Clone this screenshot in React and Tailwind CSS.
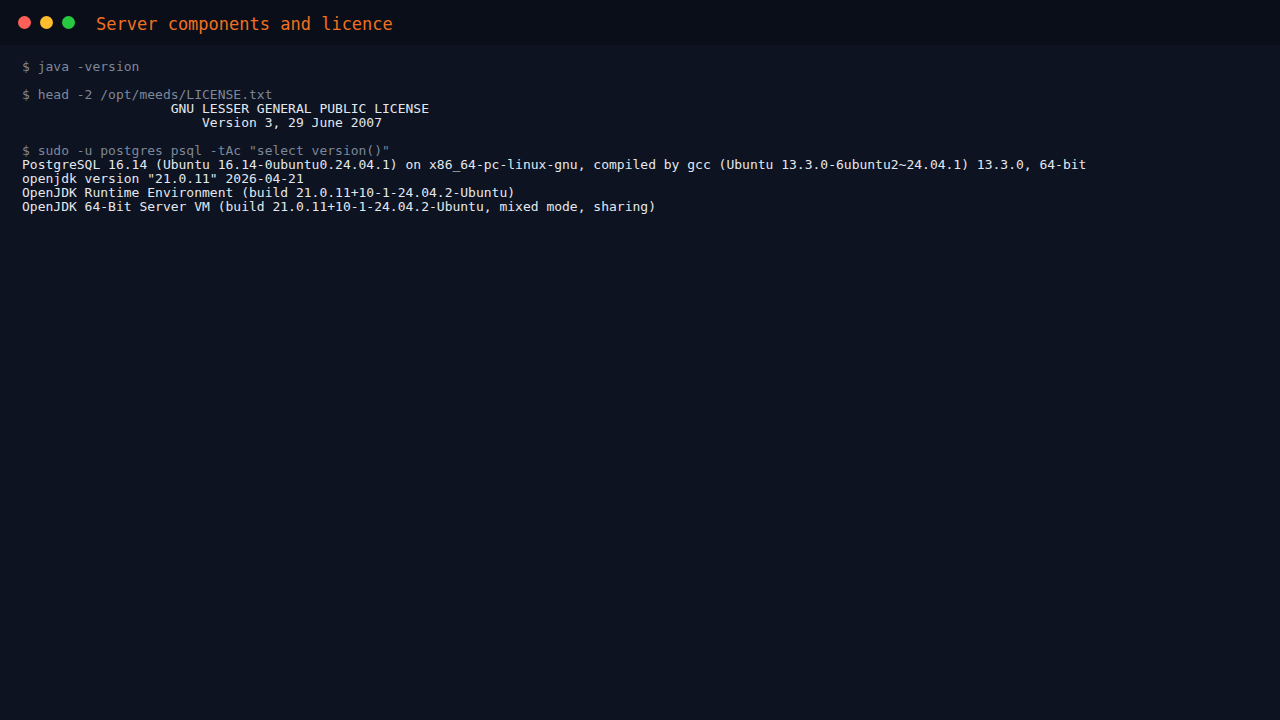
import React from 'react';

const lines = [
  { t: '$ java -version', cmd: true },
  { t: '' },
  { t: '$ head -2 /opt/meeds/LICENSE.txt', cmd: true },
  { t: '                   GNU LESSER GENERAL PUBLIC LICENSE' },
  { t: '                       Version 3, 29 June 2007' },
  { t: '' },
  { t: '$ sudo -u postgres psql -tAc "select version()"', cmd: true },
  { t: 'PostgreSQL 16.14 (Ubuntu 16.14-0ubuntu0.24.04.1) on x86_64-pc-linux-gnu, compiled by gcc (Ubuntu 13.3.0-6ubuntu2~24.04.1) 13.3.0, 64-bit' },
  { t: 'openjdk version "21.0.11" 2026-04-21' },
  { t: 'OpenJDK Runtime Environment (build 21.0.11+10-1-24.04.2-Ubuntu)' },
  { t: 'OpenJDK 64-Bit Server VM (build 21.0.11+10-1-24.04.2-Ubuntu, mixed mode, sharing)' },
];

const App = () => {
  return (
    <div className="min-h-screen w-full bg-[#0d1320] font-['DejaVu_Sans_Mono',monospace]">
      {/* title bar */}
      <div className="h-[45px] bg-[#0a0e18] flex items-center pl-[18px]">
        <div className="flex items-center gap-[9px]">
          <span className="w-[13px] h-[13px] rounded-full bg-[#ff5f57]"></span>
          <span className="w-[13px] h-[13px] rounded-full bg-[#febc2e]"></span>
          <span className="w-[13px] h-[13px] rounded-full bg-[#28c840]"></span>
        </div>
        <span className="ml-[21px] mt-[3px] text-[17px] text-[#f07022] leading-none">Server components and licence</span>
      </div>

      {/* terminal output */}
      <pre className="px-[22px] pt-[15px] text-[13px] leading-[14px] font-['DejaVu_Sans_Mono',monospace] whitespace-pre">
        {lines.map((l, i) => (
          <div key={i} className={l.cmd ? 'text-[#7d879a]' : 'text-[#e3e8ef]'}>
            {l.t || ' '}
          </div>
        ))}
      </pre>
    </div>
  );
};

export default App;
